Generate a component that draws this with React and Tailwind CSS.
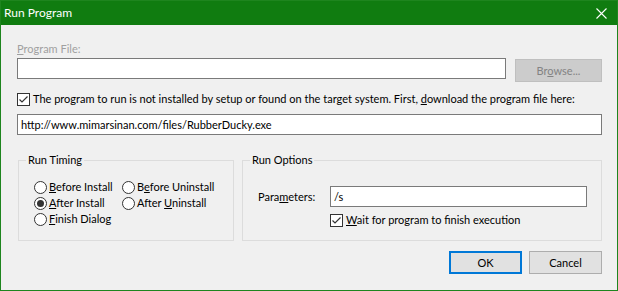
import React from "react";

const font = { fontFamily: 'Lato, "Noto Sans", sans-serif' };

function Check() {
  return (
    <span className="w-[13px] h-[13px] border border-[#333333] bg-white flex items-center justify-center shrink-0">
      <svg width="11" height="11" viewBox="0 0 11 11">
        <polyline points="1.5,5.5 4,8 9.5,2.5" fill="none" stroke="#333333" strokeWidth="1.2" />
      </svg>
    </span>
  );
}

function Radio({ on, children }) {
  return (
    <div className="flex items-center h-[16px] gap-[2px] whitespace-nowrap">
      <span className="w-[13px] h-[13px] rounded-full border border-[#333333] bg-white flex items-center justify-center shrink-0">
        {on && <span className="w-[7px] h-[7px] rounded-full bg-[#333333]" />}
      </span>
      <span className="leading-[16px]">{children}</span>
    </div>
  );
}

function Group({ label, className, children }) {
  return (
    <div className={"relative border border-[#dcdcdc] h-[81px] " + className}>
      <span className="absolute left-[7px] top-[-9px] px-[2px] bg-[#f0f0f0] leading-[16px]">{label}</span>
      {children}
    </div>
  );
}

export default function App() {
  return (
    <div
      className="w-[618px] h-[291px] border border-[#1e851e] bg-[#f0f0f0] text-[11px] text-black flex flex-col"
      style={font}
    >
      <div className="h-[24px] bg-[#107c10] flex items-center justify-between pl-[3px] pr-[10px] shrink-0">
        <span className="text-white leading-[16px] text-[12px]">Run Program</span>
        <svg width="11" height="11" viewBox="0 0 11 11">
          <path d="M0.5 0.5 L10.5 10.5 M10.5 0.5 L0.5 10.5" stroke="white" strokeWidth="1.1" />
        </svg>
      </div>
      <div className="flex flex-col pl-[16px] pr-[15px]">
        <div className="mt-[16px] h-[16px] leading-[16px] text-[#a0a0a0]">
          <u>P</u>rogram File:
        </div>
        <div className="flex items-start justify-between mt-[1px]">
          <div className="w-[489px] h-[21px] border border-[#7a7a7a] bg-white" />
          <div className="mt-[1px] w-[87px] h-[23px] border border-[#bfbfbf] bg-[#cccccc] text-[#838383] flex items-center justify-center leading-[16px]">
            <span>
              Br<u>o</u>wse...
            </span>
          </div>
        </div>
        <div className="mt-[9px] h-[16px] flex items-center gap-[3px]">
          <Check />
          <span className="leading-[16px] whitespace-nowrap">
            The program to run is not installed by setup or found on the target system. First, <u>d</u>ownload the program file here:
          </span>
        </div>
        <div className="mt-[7px] h-[21px] border border-[#7a7a7a] bg-white flex items-center pl-[3px] leading-[16px]">
          http://www.mimarsinan.com/files/RubberDucky.exe
        </div>
        <div className="mt-[25px] flex gap-[8px] pl-[1px]">
          <Group label="Run Timing" className="w-[216px]">
            <div className="mt-[18px] ml-[15px] grid grid-cols-[88px_auto]">
              <Radio>
                <u>B</u>efore Install
              </Radio>
              <Radio>
                B<u>e</u>fore Uninstall
              </Radio>
              <Radio on>
                <u>A</u>fter Install
              </Radio>
              <Radio>
                After <u>U</u>ninstall
              </Radio>
              <Radio>
                <u>F</u>inish Dialog
              </Radio>
            </div>
          </Group>
          <Group label="Run Options" className="flex-1">
            <div className="mt-[25px] ml-[15px] flex items-center">
              <span className="w-[72px] leading-[16px]">
                Para<u>m</u>eters:
              </span>
              <div className="w-[257px] h-[21px] border border-[#7a7a7a] bg-white flex items-center pl-[3px] leading-[16px]">
                /s
              </div>
            </div>
            <div className="mt-[6px] ml-[87px] h-[14px] flex items-center gap-[3px]">
              <Check />
              <span className="leading-[16px]">
                <u>W</u>ait for program to finish execution
              </span>
            </div>
          </Group>
        </div>
        <div className="mt-[10px] flex justify-end gap-[7px]">
          <div className="w-[73px] h-[23px] border-2 border-[#0078d7] bg-[#e1e1e1] flex items-center justify-center leading-[16px]">
            OK
          </div>
          <div className="w-[73px] h-[23px] border border-[#adadad] bg-[#e1e1e1] flex items-center justify-center leading-[16px]">
            Cancel
          </div>
        </div>
      </div>
    </div>
  );
}
